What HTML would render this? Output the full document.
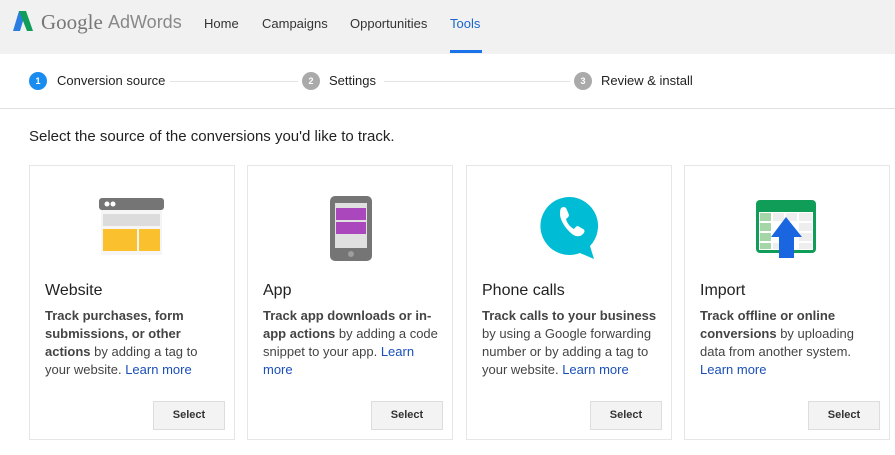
<!DOCTYPE html>
<html><head><meta charset="utf-8"><style>
*{margin:0;padding:0;box-sizing:border-box}
body{width:895px;height:455px;background:#fff;font-family:"Liberation Sans",Arial,sans-serif;position:relative;overflow:hidden;color:#222}
.hdr{position:absolute;left:0;top:0;width:895px;height:54px;background:#f1f1f1}
.abs{position:absolute;white-space:nowrap}
.nav{font-size:13px;color:#333;top:16px}
.step{font-size:13px;color:#222;top:73px}
.circ{position:absolute;width:18px;height:18px;border-radius:50%;color:#fff;font-size:9px;font-weight:bold;text-align:center;line-height:18px;top:72px}
.line{position:absolute;height:1px;background:#e4e4e4;top:81px}
.card{position:absolute;top:165px;width:206px;height:275px;border:1px solid #e6e6e6;background:#fff}
.card h3{position:absolute;left:15px;top:116px;font-size:16px;font-weight:normal;color:#222}
.card p{position:absolute;left:15px;top:141px;width:178px;font-size:13px;line-height:18px;color:#444;white-space:normal}
.card p b{color:#444}
.card a{color:#1a4fb8;text-decoration:none}
.btn{position:absolute;left:123px;top:235px;width:72px;height:29px;background:#f3f3f3;border:1px solid #ddd;font-size:11px;font-weight:bold;color:#333;text-align:center;line-height:27px}
.ic{position:absolute;left:0;top:0}
</style></head><body>
<div class="hdr"></div>
<svg class="abs" style="left:12px;top:11px" width="24" height="21" viewBox="0 0 24 21"><polygon points="7,0 14,0 8,20 1,20" fill="#2a7de1"/><polygon points="7,0 14,0 21,20 15,20" fill="#0f9d58"/></svg>
<div class="abs" style="left:41px;top:10px;font-family:'Liberation Serif',serif;font-size:21px;color:#777">Google</div>
<div class="abs" style="left:108px;top:12px;font-size:18px;color:#888">AdWords</div>
<div class="abs nav" style="left:204px">Home</div>
<div class="abs nav" style="left:262px">Campaigns</div>
<div class="abs nav" style="left:350px">Opportunities</div>
<div class="abs nav" style="left:450px;color:#1a66c8">Tools</div>
<div class="abs" style="left:450px;top:50px;width:32px;height:3px;background:#1a73e8"></div>

<div class="circ" style="left:29px;background:#1a8cf0">1</div>
<div class="abs step" style="left:57px">Conversion source</div>
<div class="line" style="left:170px;width:128px"></div>
<div class="circ" style="left:302px;background:#aaa">2</div>
<div class="abs step" style="left:329px">Settings</div>
<div class="line" style="left:384px;width:186px"></div>
<div class="circ" style="left:574px;background:#aaa">3</div>
<div class="abs step" style="left:601px">Review &amp; install</div>
<div class="abs" style="left:0;top:108px;width:895px;height:1px;background:#e0e0e0"></div>

<div class="abs" style="left:29px;top:128px;font-size:15px;color:#222">Select the source of the conversions you'd like to track.</div>

<div class="card" style="left:29px">
<svg class="ic" width="206" height="100"><rect x="69" y="32" width="65" height="12" rx="3" fill="#757575"/><circle cx="77" cy="38" r="2.5" fill="#fff"/><circle cx="83" cy="38" r="2.5" fill="#fff"/><rect x="71" y="44" width="61" height="45" fill="#f5f5f5"/><rect x="73" y="48" width="57" height="12" fill="#dcdcdc"/><rect x="73" y="63" width="34" height="22" fill="#fbc02d"/><rect x="109" y="63" width="21" height="22" fill="#fbc02d"/></svg>
<h3>Website</h3>
<p><b>Track purchases, form submissions, or other actions</b> by adding a tag to your website. <a>Learn more</a></p>
<div class="btn">Select</div></div>

<div class="card" style="left:247px">
<svg class="ic" width="206" height="100"><rect x="82" y="30" width="42" height="65" rx="5" fill="#757575"/><rect x="87" y="37" width="32" height="45" fill="#e0e0e0"/><rect x="88" y="42" width="30" height="12" fill="#ab47bc"/><rect x="88" y="56" width="30" height="12" fill="#ab47bc"/><circle cx="103" cy="88" r="3" fill="#9e9e9e"/></svg>
<h3>App</h3>
<p><b>Track app downloads or in-app actions</b> by adding a code snippet to your app. <a>Learn more</a></p>
<div class="btn">Select</div></div>

<div class="card" style="left:466px">
<svg class="ic" width="206" height="100"><path d="M103 31a29 29 0 1 0 10 56l14 6-4-13A29 29 0 0 0 103 31z" fill="#00bcd4"/><path d="M94 42c3-2 5-1 6 2l2 5c0 2-2 3-3 4 1 4 4 8 8 10 1-1 2-3 4-3l5 3c2 1 2 3 0 5-3 3-7 3-11 0-6-5-11-12-12-19 0-3 0-5 1-7z" fill="#fff"/></svg>
<h3>Phone calls</h3>
<p><b>Track calls to your business</b> by using a Google forwarding number or by adding a tag to your website. <a>Learn more</a></p>
<div class="btn">Select</div></div>

<div class="card" style="left:684px">
<svg class="ic" width="206" height="100"><rect x="71" y="34" width="60" height="53" rx="4" fill="#0f9d58"/><rect x="74" y="46" width="54" height="38" fill="#fff"/><g fill="#a5d6a7"><rect x="75" y="47" width="11" height="8"/><rect x="75" y="57" width="11" height="8"/><rect x="75" y="67" width="11" height="8"/><rect x="75" y="77" width="11" height="6"/></g><g fill="#eee"><rect x="88" y="47" width="11" height="8"/><rect x="101" y="47" width="11" height="8"/><rect x="114" y="47" width="13" height="8"/><rect x="114" y="57" width="13" height="8"/><rect x="114" y="67" width="13" height="8"/><rect x="88" y="77" width="11" height="6"/><rect x="114" y="77" width="13" height="6"/></g><polygon points="101,51 117,71 109,71 109,92 94,92 94,71 86,71" fill="#1a66e0"/></svg>
<h3>Import</h3>
<p><b>Track offline or online conversions</b> by uploading data from another system. <a>Learn more</a></p>
<div class="btn">Select</div></div>
</body></html>
